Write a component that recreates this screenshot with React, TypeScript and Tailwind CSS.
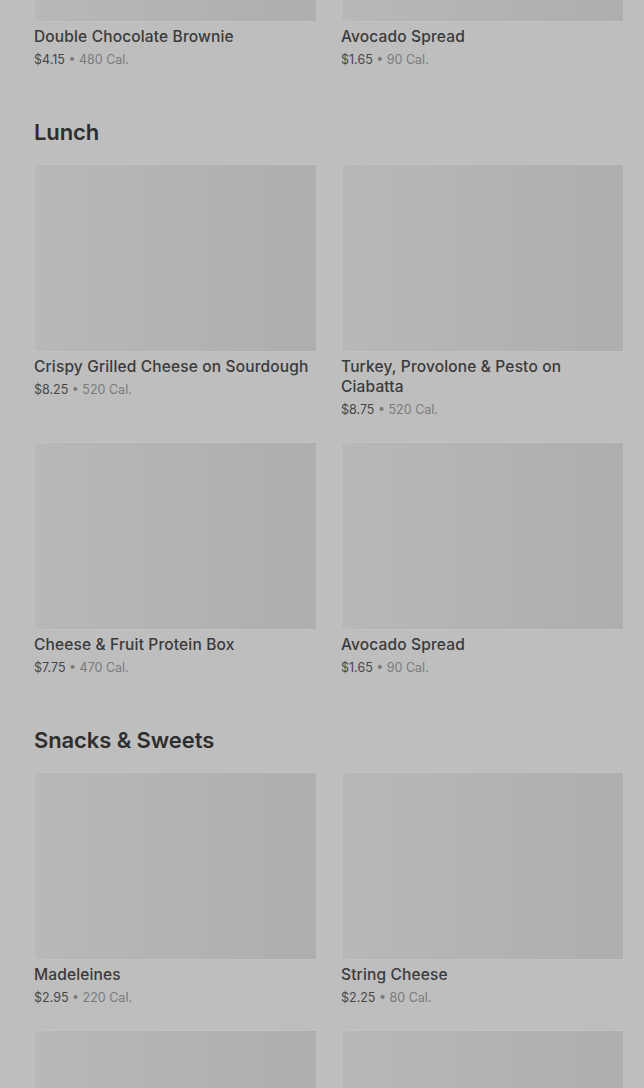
import React from 'react';

type Item = { name: string; price: string; cal: number };

const topRow: Item[] = [
    { name: 'Double Chocolate Brownie', price: '$4.15', cal: 480 },
    { name: 'Avocado Spread', price: '$1.65', cal: 90 },
];

const sections: { title: string; items: Item[] }[] = [
    {
        title: 'Lunch',
        items: [
            { name: 'Crispy Grilled Cheese on Sourdough', price: '$8.25', cal: 520 },
            { name: 'Turkey, Provolone & Pesto on Ciabatta', price: '$8.75', cal: 520 },
            { name: 'Cheese & Fruit Protein Box', price: '$7.75', cal: 470 },
            { name: 'Avocado Spread', price: '$1.65', cal: 90 },
        ],
    },
    {
        title: 'Snacks & Sweets',
        items: [
            { name: 'Madeleines', price: '$2.95', cal: 220 },
            { name: 'String Cheese', price: '$2.25', cal: 80 },
            { name: 'Kettle Chips', price: '$1.95', cal: 150 },
            { name: 'Oatmeal Cookie', price: '$2.45', cal: 360 },
        ],
    },
];

const Card: React.FC<{ item: Item }> = ({ item }) => (
    <div className="flex flex-col">
        <div className="aspect-[283/188] w-full border border-[#c1c1c1] bg-gradient-to-r from-[#b8b8b8] via-[#b3b3b3] to-[#aeaeae]" />
        <p className="mt-[5px] text-[15.5px] leading-5 font-medium tracking-[0.15px] text-[#3a3a3a]">{item.name}</p>
        <p className="mt-[4px] text-[12.5px] leading-[17px] text-[#474747]">
            {item.price}
            <span className="text-[#7a7a7a]"> • {item.cal} Cal.</span>
        </p>
    </div>
);

export default function App() {
    return (
        <div
            className="h-screen overflow-hidden bg-[#bebebe] pl-[34px] pr-[20px]"
            style={{ fontFamily: 'Inter, "Noto Sans", sans-serif' }}
        >
            {/* previous section, scrolled out of view */}
            <div className="-mt-[166px] grid grid-cols-2 gap-x-6 gap-y-6">
                {topRow.map((item) => (
                    <Card key={item.name} item={item} />
                ))}
            </div>

            {sections.map((section) => (
                <section key={section.title}>
                    <h2 className="mt-[48px] mb-[16px] text-[22px] leading-8 font-semibold tracking-[-0.1px] text-[#2e2e2e]">
                        {section.title}
                    </h2>
                    <div className="grid grid-cols-2 gap-x-6 gap-y-6">
                        {section.items.map((item, i) => (
                            <Card key={i} item={item} />
                        ))}
                    </div>
                </section>
            ))}
        </div>
    );
}
